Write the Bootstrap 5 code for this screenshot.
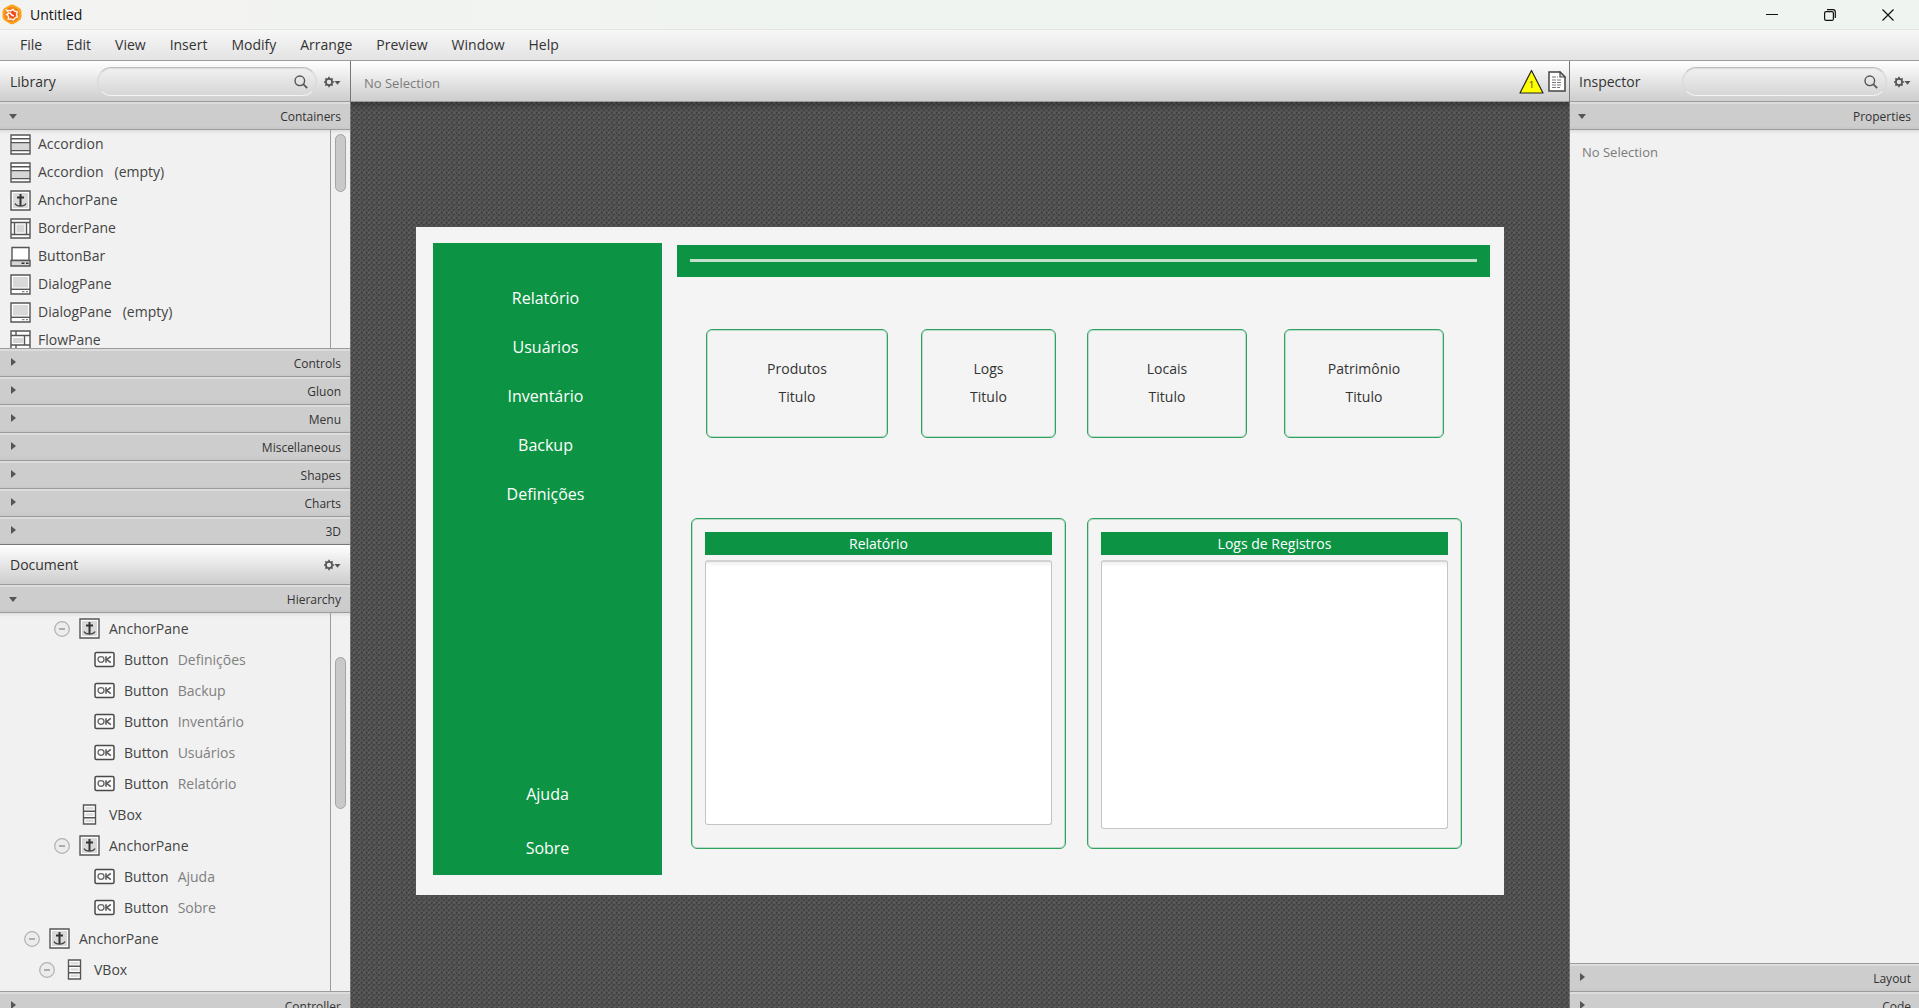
<!DOCTYPE html>
<html lang="en">
<head>
<meta charset="utf-8">
<meta name="viewport" content="width=device-width, initial-scale=1">
<title>Untitled</title>
<link href="https://cdn.jsdelivr.net/npm/bootstrap@5.3.0/dist/css/bootstrap.min.css" rel="stylesheet">
<style>
  :root { --ink: #333; --line: #9c9c9c; --green: #0c9444; }
  body { font-family: "Open Sans", "Noto Sans", sans-serif; font-size: 14px; line-height: 20px; color: var(--ink); background: #f1f1f1; overflow: hidden; }
  button { border: 0; background: none; padding: 0; color: inherit; font: inherit; }
  svg { display: block; flex: none; }
  .app { height: calc(100vh + 11px); }

  /* window chrome */
  .titlebar { height: 29px; padding: 0 2px; color: #111; background: linear-gradient(90deg, #f3f3f2, #eff4f0 50%, #eff4f0); }
  .win-btn { width: 58px; height: 29px; }
  .menubar { height: 32px; padding: 0 8px; border-top: 1px solid #e2e6e3; border-bottom: 1px solid var(--line); background: linear-gradient(#f7f7f7, #e3e3e3); }
  .menubar button { padding: 0 12px; }

  /* side panels */
  .side { width: 350px; min-height: 0; }
  .side-left { border-right: 1px solid #777; box-sizing: content-box; }
  .side-right { border-left: 1px solid #777; }
  .bar { height: 40px; background: linear-gradient(#fff, #cdcdcd); }
  .panel-head { padding: 1px 9px 0 10px; }
  .side-right .panel-head { padding: 1px 8px 0 9px; }
  .doc-head { border-top: 1px solid #777; }
  .search { width: 220px; height: 29px; border-radius: 15px; border: 1px solid; border-color: #bdbdbd #d8d8d8 #f3f3f3; background: linear-gradient(#f1f1f1, #d6d6d6); padding: 0 8px 0 12px; margin-right: 7px; box-shadow: inset 0 1px 1px #dcdcdc; }
  .side-right .search { width: 205px; }
  .search input { border: 0; background: transparent; outline: 0; min-width: 0; }
  .sect { height: 28px; flex: none; font-size: 12px; padding: 3px 9px 0; border-top: 1px solid var(--line); background: linear-gradient(#dcdcdc 2px, #cdcdcd 2px, #cdcdcd 24px, #c6c6c6); }
  .side-right .sect { padding: 3px 8px 0; }
  .tri-down { border: solid transparent; border-width: 5px 4px 0; border-top-color: #555; margin-top: -2px; }
  .tri-right { border: solid transparent; border-width: 4px 0 4px 5px; border-left-color: #555; margin: -5px 2px 0; }
  .pane { border-top: 1px solid var(--line); background: linear-gradient(#dedede, #f1f1f1 4px); overflow: hidden; min-height: 0; }
  .lib { height: 219px; flex: none; }
  .rail { width: 20px; border-left: 1px solid var(--line); padding-left: 4px; }
  .thumb { width: 11px; border-radius: 6px; background: #c9c9c9; border: 1px solid #a3a3a3; }
  .thumb-lib { height: 58px; margin-top: 4px; }
  .thumb-tree { height: 152px; margin-top: 44px; }
  .lib-row { height: 28px; padding-left: 10px; gap: 7px; color: #444; }
  .lib-row em { font-style: normal; margin-left: 4px; }
  .tree-row { height: 31px; gap: 9px; color: #444; }
  .tree-row em { font-style: normal; color: #808080; }
  .lv0 { padding-left: 24px; } .lv1 { padding-left: 39px; } .lv2 { padding-left: 54px; } .lv3 { padding-left: 94px; }
  .blank { width: 16px; }
  .muted { color: #7b7b7b; font-size: 13px; }

  /* editor */
  .center-bar { border-bottom: 1px solid var(--line); padding: 0 3px 0 13px; gap: 4px; height: 41px; }
  .center-bar .muted { padding-top: 3px; }
  .stage { min-height: 0; padding: 0 65px; background-color: #525252;
    background-image: linear-gradient(rgba(20,20,20,.35), transparent 8px), radial-gradient(circle, #404040 1px, transparent 1px), radial-gradient(circle, #404040 1px, transparent 1px), radial-gradient(circle, #5e5e5e 1px, transparent 1px);
    background-size: auto, 5px 5px, 5px 5px, 5px 5px; background-position: 0 0, 0 0, 3px 3px, 0 3px; background-repeat: no-repeat, repeat, repeat, repeat; }
  .mock { min-height: 668px; background: #f4f4f4; padding: 16px 14px 20px 17px; gap: 15px; }
  .mock-nav { width: 229px; flex: none; background: var(--green); color: #fff; font-size: 16px; padding-top: 31px; }
  .mock-nav .top button { height: 49px; padding-right: 4px; }
  .mock-nav .end button { height: 54px; }
  .mock-main { padding-top: 2px; min-width: 0; }
  .strip { height: 32px; background: var(--green); padding: 0 13px 1px; }
  .strip hr { height: 3px; border: 0; background: #c4dfcc; opacity: 1; margin: 0; }
  .outline { border: 1px solid #2fa25f; border-radius: 6px; box-shadow: inset 0 0 0 1px rgba(12,148,68,.25); }
  .tiles { margin: 52px 46px 80px 29px; }
  .tile { height: 109px; line-height: 28px; }
  .w-a { width: 182px; margin-right: 33px; } .w-b { width: 135px; margin-right: 31px; } .w-c { width: 160px; }
  .boards { margin: 0 28px 0 14px; gap: 21px; }
  .board { height: 331px; padding: 13px; flex: 1; }
  .board h2 { height: 23px; line-height: 23px; font-size: 14px; font-weight: 400; color: #fff; background: var(--green); margin: 0 0 5px; text-align: center; }
  .listbox { border: 1px solid #c4c4c4; border-top: 2px solid #d3d3d3; border-radius: 3px; background: linear-gradient(#f0f0f0, #fff 5px); height: 265px; }
  .listbox.tall { height: 269px; }
</style>
<script src="https://cdn.jsdelivr.net/npm/bootstrap@5.3.0/dist/js/bootstrap.bundle.min.js"></script>
</head>
<body>
<svg width="0" height="0" class="position-absolute" aria-hidden="true">
  <symbol id="accordion" viewBox="0 0 21 21"><path fill="#fff" stroke="#555" stroke-width="1.4" d="M1 1h19v19H1z"/><path fill="#d6d6d6" d="M2 9h17v7H2z"/><path stroke="#555" stroke-width="1.4" d="M1 4.700h19M1 8.600h19M1 16.600h19"/></symbol>
  <symbol id="anchor" viewBox="0 0 21 21"><path fill="#fff" stroke="#555" stroke-width="1.400" d="M1 1h19v19H1z"/><path fill="#d9d9d9" d="M3 3h15v15H3z"/><path fill="none" stroke="#333" stroke-width="2" d="M10.500 4v12M7 7.500h7"/><path fill="none" stroke="#444" stroke-width="1.400" d="M5 13.500c1 2 3 2.500 5.500 2.500s4.500-.5 5.500-2.500"/></symbol>
  <symbol id="border" viewBox="0 0 21 21"><path fill="#fff" stroke="#555" stroke-width="1.400" d="M1 1h19v19H1z"/><path fill="#d6d6d6" d="M6.500 6.500h8v8h-8z"/><path fill="none" stroke="#555" stroke-width="1.400" d="M1 4.500h19M1 16.500h19M4.500 4.500v12M16.500 4.500v12"/></symbol>
  <symbol id="buttonbar" viewBox="0 0 21 21"><path fill="#fff" stroke="#555" stroke-width="1.400" d="M2 1.500h17v13H2z"/><path fill="#d6d6d6" stroke="#555" stroke-width="1.400" d="M1 14.500h19v5.500H1z"/><path stroke="#333" stroke-width="1.500" d="M11.500 17.300h3M16 17.300h2.500"/></symbol>
  <symbol id="dialog" viewBox="0 0 21 21"><path fill="#fff" stroke="#555" stroke-width="1.400" d="M1 1h19v19H1z"/><path fill="#d9d9d9" d="M3 3h15v10.500H3z"/><path stroke="#555" stroke-width="1.400" d="M1 15.300h19"/><path stroke="#888" stroke-width="1.200" d="M12 17.700h2.500M16 17.700h2"/></symbol>
  <symbol id="flow" viewBox="0 0 21 21"><path fill="#fff" stroke="#555" stroke-width="1.400" d="M1 1h19v19H1z"/><path fill="#d6d6d6" d="M3 8h10v5H3z"/><path fill="none" stroke="#555" stroke-width="1.400" d="M1 5.500h19M6 1v4.500M14.500 5.500V15M1 15h19M6 15v5"/></symbol>
  <symbol id="vbox" viewBox="0 0 21 21"><path fill="#fff" stroke="#555" stroke-width="1.400" d="M4.500 1h12v19h-12z"/><path fill="#dcdcdc" d="M6.500 3h8v2.500h-8zM6.500 9.200h8v2.500h-8zM6.500 15.500h8V18h-8z"/><path stroke="#555" stroke-width="1.400" d="M4.500 7.300h12M4.500 13.700h12"/></symbol>
  <symbol id="ok" viewBox="0 0 21 21"><rect x="1" y="3.500" width="19" height="14" rx="1.500" fill="#fafafa" stroke="#4a4a4a" stroke-width="1.500"/><ellipse cx="7" cy="10.500" rx="3" ry="2.800" fill="none" stroke="#666" stroke-width="1.300"/><path fill="none" stroke="#555" stroke-width="1.500" d="M12 7.200v6.600M16.800 7.300l-4 3.200 4 3.200"/></symbol>
  <symbol id="minus" viewBox="0 0 16 16"><circle cx="8" cy="8" r="7.300" fill="#ececec" stroke="#b0b0b0" stroke-width="1.200"/><path stroke="#999" stroke-width="1.500" d="M5 8h6"/></symbol>
  <symbol id="lens" viewBox="0 0 14 14"><circle cx="5.800" cy="5.800" r="4.800" fill="none" stroke="#555" stroke-width="1.400"/><path stroke="#555" stroke-width="1.700" d="M9.200 9.200l4 4"/></symbol>
  <symbol id="gear" viewBox="0 0 17 12"><circle cx="5" cy="6" r="3.100" fill="none" stroke="#555" stroke-width="1.700"/><path stroke="#555" stroke-width="1.600" d="M5 .8v2M5 9.200v2M-.2 6h2M8.200 6h2M1.400 2.400l1.300 1.300M7.300 8.300l1.300 1.300M1.400 9.600l1.300-1.300M7.300 3.700l1.300-1.300"/><path fill="#555" d="M10.500 5h6l-3 3.800z"/></symbol>
</svg>

<div class="app d-flex flex-column">
  <header class="titlebar d-flex align-items-center flex-shrink-0">
    <svg width="20" height="23" viewBox="0 0 20 21"><path fill="#f9a61c" d="M7 1.500Q10-.5 13 1.500l4 2.300q2.500 1.500 2.500 4v5q0 2.500-2.500 4l-4 2.500q-3 2-6 0l-4-2.500q-2.500-1.500-2.500-4v-5q0-2.500 2.500-4z"/><circle cx="10" cy="10.500" r="7.600" fill="#f5821f"/><circle cx="10.500" cy="10.500" r="3.400" fill="#ef4a23"/><path fill="none" stroke="#fff" stroke-width="1.200" d="M4.500 6l4 .8 2.500-1.600 1.500 2 2.800.8-.8 2.800 1 2.200-2.500 1-1.500 2-2.500-1-2.800.2.300-3-2-1.800 2.500-1.200zM8 8.500q1 3 4 3.500"/></svg>
    <span class="ms-1 px-1">Untitled</span>
    <div class="ms-auto d-flex">
      <button class="win-btn d-grid" aria-label="Minimize"><svg class="m-auto" width="12" height="12" stroke="#111" fill="none"><path d="M0 5.500h12"/></svg></button>
      <button class="win-btn d-grid" aria-label="Restore"><svg class="m-auto" width="12" height="12" stroke="#111" fill="none" stroke-width="1.200"><rect x=".6" y="2.600" width="8.800" height="8.800" rx="1.500"/><path d="M3 .7h6q2.300 0 2.300 2.300v6"/></svg></button>
      <button class="win-btn d-grid" aria-label="Close"><svg class="m-auto" width="12" height="12" stroke="#111" stroke-width="1.200"><path d="M.5.500l11 11M11.500.500l-11 11"/></svg></button>
    </div>
  </header>
  <nav class="menubar d-flex align-items-stretch flex-shrink-0">
    <button>File</button><button>Edit</button><button>View</button><button>Insert</button><button>Modify</button><button>Arrange</button><button>Preview</button><button>Window</button><button>Help</button>
  </nav>

  <div class="d-flex flex-grow-1 overflow-hidden">
    <aside class="side side-left d-flex flex-column flex-shrink-0">
      <div class="bar panel-head d-flex align-items-center flex-shrink-0">
        <label for="lib-search">Library</label>
        <div class="search d-flex align-items-center ms-auto"><input id="lib-search" class="flex-grow-1" type="text"><svg width="14" height="14"><use href="#lens"/></svg></div>
        <button aria-label="Library options"><svg width="17" height="12"><use href="#gear"/></svg></button>
      </div>
      <button class="sect d-flex align-items-center justify-content-between"><i class="tri-down"></i>Containers</button>
      <div class="pane lib d-flex">
        <ul class="list-unstyled mb-0 flex-grow-1">
          <li class="lib-row d-flex align-items-center"><svg width="21" height="21"><use href="#accordion"/></svg>Accordion</li>
          <li class="lib-row d-flex align-items-center"><svg width="21" height="21"><use href="#accordion"/></svg>Accordion <em>(empty)</em></li>
          <li class="lib-row d-flex align-items-center"><svg width="21" height="21"><use href="#anchor"/></svg>AnchorPane</li>
          <li class="lib-row d-flex align-items-center"><svg width="21" height="21"><use href="#border"/></svg>BorderPane</li>
          <li class="lib-row d-flex align-items-center"><svg width="21" height="21"><use href="#buttonbar"/></svg>ButtonBar</li>
          <li class="lib-row d-flex align-items-center"><svg width="21" height="21"><use href="#dialog"/></svg>DialogPane</li>
          <li class="lib-row d-flex align-items-center"><svg width="21" height="21"><use href="#dialog"/></svg>DialogPane <em>(empty)</em></li>
          <li class="lib-row d-flex align-items-center"><svg width="21" height="21"><use href="#flow"/></svg>FlowPane</li>
        </ul>
        <div class="rail"><div class="thumb thumb-lib"></div></div>
      </div>
      <button class="sect d-flex align-items-center justify-content-between"><i class="tri-right"></i>Controls</button>
      <button class="sect d-flex align-items-center justify-content-between"><i class="tri-right"></i>Gluon</button>
      <button class="sect d-flex align-items-center justify-content-between"><i class="tri-right"></i>Menu</button>
      <button class="sect d-flex align-items-center justify-content-between"><i class="tri-right"></i>Miscellaneous</button>
      <button class="sect d-flex align-items-center justify-content-between"><i class="tri-right"></i>Shapes</button>
      <button class="sect d-flex align-items-center justify-content-between"><i class="tri-right"></i>Charts</button>
      <button class="sect d-flex align-items-center justify-content-between"><i class="tri-right"></i>3D</button>
      <div class="bar panel-head doc-head d-flex align-items-center justify-content-between flex-shrink-0">
        <span>Document</span>
        <button aria-label="Document options"><svg width="17" height="12"><use href="#gear"/></svg></button>
      </div>
      <button class="sect d-flex align-items-center justify-content-between"><i class="tri-down"></i>Hierarchy</button>
      <div class="pane d-flex flex-grow-1">
        <ul class="list-unstyled mb-0 flex-grow-1">
          <li class="tree-row lv2 d-flex align-items-center"><svg width="16" height="16"><use href="#minus"/></svg><svg width="21" height="21"><use href="#anchor"/></svg>AnchorPane</li>
          <li class="tree-row lv3 d-flex align-items-center"><svg width="21" height="21"><use href="#ok"/></svg>Button <em>Definições</em></li>
          <li class="tree-row lv3 d-flex align-items-center"><svg width="21" height="21"><use href="#ok"/></svg>Button <em>Backup</em></li>
          <li class="tree-row lv3 d-flex align-items-center"><svg width="21" height="21"><use href="#ok"/></svg>Button <em>Inventário</em></li>
          <li class="tree-row lv3 d-flex align-items-center"><svg width="21" height="21"><use href="#ok"/></svg>Button <em>Usuários</em></li>
          <li class="tree-row lv3 d-flex align-items-center"><svg width="21" height="21"><use href="#ok"/></svg>Button <em>Relatório</em></li>
          <li class="tree-row lv2 d-flex align-items-center"><i class="blank"></i><svg width="21" height="21"><use href="#vbox"/></svg>VBox</li>
          <li class="tree-row lv2 d-flex align-items-center"><svg width="16" height="16"><use href="#minus"/></svg><svg width="21" height="21"><use href="#anchor"/></svg>AnchorPane</li>
          <li class="tree-row lv3 d-flex align-items-center"><svg width="21" height="21"><use href="#ok"/></svg>Button <em>Ajuda</em></li>
          <li class="tree-row lv3 d-flex align-items-center"><svg width="21" height="21"><use href="#ok"/></svg>Button <em>Sobre</em></li>
          <li class="tree-row lv0 d-flex align-items-center"><svg width="16" height="16"><use href="#minus"/></svg><svg width="21" height="21"><use href="#anchor"/></svg>AnchorPane</li>
          <li class="tree-row lv1 d-flex align-items-center"><svg width="16" height="16"><use href="#minus"/></svg><svg width="21" height="21"><use href="#vbox"/></svg>VBox</li>
        </ul>
        <div class="rail"><div class="thumb thumb-tree"></div></div>
      </div>
      <button class="sect d-flex align-items-center justify-content-between"><i class="tri-right"></i>Controller</button>
    </aside>

    <main class="d-flex flex-column flex-grow-1 overflow-hidden">
      <div class="bar center-bar d-flex align-items-center flex-shrink-0">
        <span class="muted me-auto">No Selection</span>
        <svg width="25" height="25" viewBox="0 0 25 25"><path fill="#ff0" stroke="#222" stroke-width="1.200" stroke-linejoin="round" d="M12.500 1.500L24 24H1z"/><text x="12.500" y="19" font-size="9" text-anchor="middle" fill="#333">1</text></svg>
        <svg width="18" height="21" viewBox="0 0 18 21"><path fill="#fff" stroke="#444" stroke-width="1.500" d="M1 1h11l5 5v14H1z"/><path fill="#ddd" stroke="#444" stroke-width="1.200" d="M12 1v5h5z"/><path stroke="#777" stroke-width="1.200" stroke-dasharray="4 1" d="M4 6h6M4 9h10M4 11.500h9M4 14h10M4 16.500h8"/></svg>
      </div>
      <div class="stage flex-grow-1 d-flex align-items-center">
        <section class="mock d-flex flex-grow-1">
          <nav class="mock-nav d-flex flex-column justify-content-between">
            <div class="top d-flex flex-column"><button>Relatório</button><button>Usuários</button><button>Inventário</button><button>Backup</button><button>Definições</button></div>
            <div class="end d-flex flex-column"><button>Ajuda</button><button>Sobre</button></div>
          </nav>
          <div class="mock-main flex-grow-1">
            <div class="strip d-flex align-items-center"><hr class="flex-grow-1"></div>
            <div class="tiles d-flex">
              <div class="tile outline w-a d-flex flex-column justify-content-center text-center"><span>Produtos</span><span>Titulo</span></div>
              <div class="tile outline w-b d-flex flex-column justify-content-center text-center"><span>Logs</span><span>Titulo</span></div>
              <div class="tile outline w-c d-flex flex-column justify-content-center text-center"><span>Locais</span><span>Titulo</span></div>
              <div class="tile outline w-c ms-auto d-flex flex-column justify-content-center text-center"><span>Patrimônio</span><span>Titulo</span></div>
            </div>
            <div class="boards d-flex">
              <section class="board outline"><h2>Relatório</h2><div class="listbox"></div></section>
              <section class="board outline"><h2>Logs de Registros</h2><div class="listbox tall"></div></section>
            </div>
          </div>
        </section>
      </div>
    </main>

    <aside class="side side-right d-flex flex-column flex-shrink-0">
      <div class="bar panel-head d-flex align-items-center flex-shrink-0">
        <label for="insp-search">Inspector</label>
        <div class="search d-flex align-items-center ms-auto"><input id="insp-search" class="flex-grow-1" type="text"><svg width="14" height="14"><use href="#lens"/></svg></div>
        <button aria-label="Inspector options"><svg width="17" height="12"><use href="#gear"/></svg></button>
      </div>
      <button class="sect d-flex align-items-center justify-content-between"><i class="tri-down"></i>Properties</button>
      <div class="pane flex-grow-1 px-2 py-2"><p class="muted mb-0 ps-1 pt-1">No Selection</p></div>
      <button class="sect d-flex align-items-center justify-content-between"><i class="tri-right"></i>Layout</button>
      <button class="sect d-flex align-items-center justify-content-between"><i class="tri-right"></i>Code</button>
    </aside>
  </div>
</div>
</body>
</html>
